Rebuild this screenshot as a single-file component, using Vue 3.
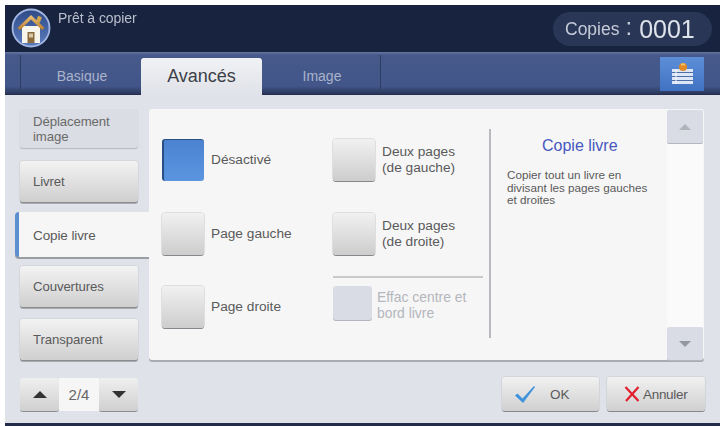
<script setup>
const navItems = [
  { label: 'Déplacement image', state: 'flat' },
  { label: 'Livret', state: 'raised' },
  { label: 'Copie livre', state: 'active' },
  { label: 'Couvertures', state: 'raised' },
  { label: 'Transparent', state: 'raised' },
]
</script>

<template>
  <div class="screen">
    <header class="status">
      <div class="home">
        <svg width="40" height="40" viewBox="0 0 40 40">
          <defs>
            <linearGradient id="hb" x1="0" y1="0" x2="0" y2="1">
              <stop offset="0" stop-color="#2f4a86" />
              <stop offset="1" stop-color="#5a7cc0" />
            </linearGradient>
            <linearGradient id="roof" x1="0" y1="0" x2="0" y2="1">
              <stop offset="0" stop-color="#efc577" />
              <stop offset="1" stop-color="#b87a2c" />
            </linearGradient>
          </defs>
          <circle cx="20" cy="20" r="18.500" fill="url(#hb)" stroke="#a3b6e2" stroke-width="1.800" />
          <rect x="11" y="18" width="18" height="17" fill="#f8f5ec" />
          <rect x="26" y="8" width="4" height="6" fill="#d6a84e" transform="rotate(20 27 11)" />
          <path d="M6.500 20 20 7l13.500 13-2.500 2L20 11.500 9 22z" fill="url(#roof)" />
          <rect x="16.500" y="24" width="7" height="11" fill="#8d6b3c" />
          <rect x="18" y="25.500" width="4" height="4" fill="#d6c8a8" />
        </svg>
      </div>
      <span class="ready">Prêt à copier</span>
      <div class="copies">
        <span class="copies-label">Copies</span>
        <span class="copies-colon">:</span>
        <span class="copies-value">0001</span>
      </div>
    </header>

    <nav class="tabs">
      <div class="tab first">Basique</div>
      <div class="tab current">Avancés</div>
      <div class="tab last">Image</div>
      <div class="tray">
        <svg width="26" height="26" viewBox="0 0 26 26">
          <rect x="3" y="8" width="21" height="15" fill="#dce6f6" />
          <path d="M3 11.500h21M3 15.500h21M3 19.500h21" stroke="#4f6ea3" stroke-width="1.200" />
          <path d="M7 8v15" stroke="#f6f8fc" stroke-width="1" />
          <circle cx="14" cy="6" r="4" fill="#e28a26" />
          <path d="M12 2.500h4v2h-4z" fill="#f4c26a" />
        </svg>
      </div>
    </nav>

    <main class="body">
      <aside class="side">
        <div class="nav">
          <div v-for="item in navItems" :key="item.label" class="nav-item" :class="item.state">
            {{ item.label }}
          </div>
        </div>
        <div class="pager">
          <button class="pg-btn"><span class="tri up"></span></button>
          <div class="pg-num">2/4</div>
          <button class="pg-btn"><span class="tri down"></span></button>
        </div>
      </aside>

      <div class="content">
        <section class="panel">
          <div class="options">
            <div class="col col-a">
              <div class="opt"><span class="box on"></span><span class="opt-text">Désactivé</span></div>
              <div class="opt"><span class="box"></span><span class="opt-text">Page gauche</span></div>
              <div class="opt low"><span class="box"></span><span class="opt-text">Page droite</span></div>
            </div>
            <div class="col col-b">
              <div class="opt"><span class="box"></span><span class="opt-text two">Deux pages<br />(de gauche)</span></div>
              <div class="opt"><span class="box"></span><span class="opt-text two">Deux pages<br />(de droite)</span></div>
              <div class="opt disabled"><span class="box off"></span><span class="opt-text">Effac centre et<br />bord livre</span></div>
            </div>
          </div>
          <div class="info">
            <h2>Copie livre</h2>
            <p>Copier tout un livre en divisant les pages gauches et droites</p>
          </div>
          <div class="scroll">
            <div class="sc-btn"><span class="tri sm up"></span></div>
            <div class="sc-btn"><span class="tri sm down"></span></div>
          </div>
        </section>
        <footer class="actions">
          <button class="act ok">
            <svg width="22" height="19" viewBox="0 0 22 19"><path d="M1 10.500 3.500 8.500 8.500 13.500 20 1l1 1L9 18z" fill="#3f92dc" /></svg>
            <span>OK</span>
          </button>
          <button class="act cancel">
            <svg width="16" height="16" viewBox="0 0 16 16"><path d="M1.500 1 14.500 15M14.500 1 2 15" stroke="#e0202c" stroke-width="2.200" fill="none" /></svg>
            <span>Annuler</span>
          </button>
        </footer>
      </div>
    </main>
  </div>
</template>

<style>
html, body { margin: 0; background: #fff; overflow: hidden; }
</style>

<style scoped>
.screen {
  box-sizing: border-box;
  width: 720px;
  height: 426px;
  padding: 5px 0 0 5px;
  display: flex;
  flex-direction: column;
  font-family: "Liberation Sans", Arial, sans-serif;
  color: #555;
  overflow: hidden;
  filter: blur(0.35px);
}
.status {
  height: 47px;
  flex: none;
  display: flex;
  background: #18233f;
  position: relative;
  padding-left: 6px;
  box-sizing: border-box;
}
.home { margin-top: 3px; width: 40px; height: 40px; }
.ready {
  margin: 5px 0 0 7px;
  font-size: 14px;
  letter-spacing: -0.05px;
  color: #b9bfcc;
}
.copies {
  margin: 7px 8px 0 auto;
  width: 159px;
  height: 34px;
  box-sizing: border-box;
  border-radius: 17px;
  background: #2a3656;
  color: #c5cbd8;
  display: flex;
  align-items: center;
  padding-left: 12px;
}
.copies-label { font-size: 17.500px; }
.copies-colon { font-size: 24px; margin: -4px 7px 0 6px; }
.copies-value { font-size: 25px; color: #dfe3ea; }
.tabs {
  height: 43px;
  flex: none;
  display: flex;
  background: linear-gradient(#6477a0 0, #46598a 3px, #43568a 34px, #2c3a5e 41px, #232c48 43px);
  position: relative;
}
.tab {
  box-sizing: border-box;
  height: 36px;
  margin-top: 6px;
  display: flex;
  align-items: center;
  justify-content: center;
  font-size: 14px;
  color: #a9b3cb;
}
.first { width: 136px; padding-left: 18px; }
.first::before {
  content: "";
  position: absolute;
  left: 15px;
  top: 3px;
  height: 35px;
  width: 1px;
  background: #2e3d63;
}
.current {
  width: 121px;
  height: 37px;
  border-radius: 3px 3px 0 0;
  background: linear-gradient(#f1f2f5, #dfe2e8);
  color: #3c3f47;
  font-size: 18px;
}
.last { width: 120px; }
.last::after {
  content: "";
  position: absolute;
  left: 375px;
  top: 3px;
  height: 35px;
  width: 1px;
  background: #2e3d63;
}
.tray {
  position: absolute;
  right: 16px;
  top: 5px;
  width: 44px;
  height: 34px;
  background: linear-gradient(#5d8fd8, #3f72c2);
  display: flex;
  align-items: center;
  justify-content: center;
}
.body {
  flex: 1;
  display: flex;
  background: #dfe2e8;
  border-bottom: 3px solid #232c48;
  min-height: 0;
}
.side {
  width: 144px;
  flex: none;
  padding-top: 14px;
  display: flex;
  flex-direction: column;
}
.nav {
  display: flex;
  flex-direction: column;
}
.nav-item {
  box-sizing: border-box;
  width: 118px;
  margin-left: 15px;
  padding: 0 13px;
  display: flex;
  align-items: center;
  font-size: 13.200px;
  line-height: 15px;
  letter-spacing: -0.1px;
  border-radius: 3px;
  color: #5a5a5a;
}
.nav-item.flat {
  height: 39px;
  background: #dadde3;
  box-shadow: 0 1px 1px #b5b8bf;
  color: #6a6a6a;
}
.nav-item.raised {
  height: 41px;
  background: linear-gradient(#f3f3f3, #cfcfcf);
  box-shadow: 0 1px 0 #8a8c90, 0 2px 0 #a9abb0, 0 0 0 .5px #c8c9cc;
}
.nav-item.flat + .nav-item { margin-top: 13px; }
.nav-item.raised + .active { margin-top: 10px; }
.active + .raised { margin-top: 9px; }
.raised + .raised { margin-top: 12px; }
.nav-item.active {
  position: relative;
  width: 134px;
  height: 45px;
  margin-left: 10px;
  background: #f6f6f6;
  border-left: 4px solid #5d8fd0;
  padding: 1px 0 0 14px;
  border-radius: 4px 0 0 4px;
  box-shadow: 0 2px 0 #9a9da3;
  font-size: 13.500px;
  z-index: 2;
}
.pager {
  margin: 18px 0 0 15px;
  width: 118px;
  height: 33px;
  display: flex;
  border-radius: 3px;
}
.pg-btn {
  width: 39px;
  border: 0;
  padding: 0;
  border-radius: 3px;
  background: linear-gradient(#efefef, #d0d0d0);
  box-shadow: 0 1px 0 #8a8c90;
  display: flex;
  align-items: center;
  justify-content: center;
}
.pg-num {
  width: 40px;
  background: #f6f6f6;
  display: flex;
  align-items: center;
  justify-content: center;
  font-size: 15px;
  color: #666;
}
.tri {
  display: block;
  width: 0;
  height: 0;
  border-left: 7px solid transparent;
  border-right: 7px solid transparent;
}
.tri.up { border-bottom: 7px solid #333; }
.tri.down { border-top: 7px solid #333; }
.tri.sm { border-left-width: 6px; border-right-width: 6px; }
.tri.sm.up { border-bottom: 6px solid #b0b4bb; }
.tri.sm.down { border-top: 6px solid #9498a0; }
.content {
  flex: 1;
  min-width: 0;
  padding-top: 14px;
  display: flex;
  flex-direction: column;
}
.panel {
  position: relative;
  margin-right: 16px;
  height: 251px;
  box-sizing: border-box;
  background: #f6f6f6;
  border-radius: 3px;
  box-shadow: 0 2px 0 #a9abb0;
  display: flex;
  padding: 20px 0 22px 0;
}
.options {
  width: 342px;
  flex: none;
  display: flex;
  border-right: 2px solid #b8babe;
  box-sizing: border-box;
}
.col { display: flex; flex-direction: column; }
.col-a { width: 184px; padding: 10px 0 0 13px; box-sizing: border-box; gap: 32px; }
.col-b { flex: 1; padding-top: 10px; padding-right: 6px; gap: 32px; }
.low { margin-top: -1px; }
.opt { display: flex; align-items: center; height: 42px; }
.box {
  width: 42px;
  height: 42px;
  flex: none;
  box-sizing: border-box;
  border-radius: 3px;
  background: linear-gradient(#f1f1f1, #cdcdcd);
  box-shadow: 0 1px 0 #85878c, 0 0 0 .5px #c4c5c8;
}
.box.on {
  background: linear-gradient(#4b83d1, #5b95e0);
  border-top: 1px solid #2a4f86;
  border-left: 2px solid #2a4f86;
  box-shadow: none;
}
.box.off {
  width: 39px;
  height: 34px;
  background: #d9dce4;
  box-shadow: 0 1px 0 #b3b6bd;
}
.opt-text {
  margin-left: 7px;
  font-size: 13.700px;
  line-height: 16px;
  color: #5a5a5a;
}
.opt-text.two { margin-top: -1px; }
.disabled {
  height: 53px;
  margin-top: -11px;
  border-top: 2px solid #c9cacc;
  box-sizing: border-box;
  align-items: flex-start;
  padding-top: 8px;
}
.disabled .opt-text { color: #b4b7bd; margin-left: 5px; margin-top: 3px; font-size: 13.900px; }
.info {
  width: 174px;
  flex: none;
  box-sizing: border-box;
  padding: 8px 0 0 16px;
}
.info h2 {
  margin: 0 0 0 35px;
  font-weight: 400;
  font-size: 16px;
  color: #4658c0;
}
.info p {
  margin: 14px 0 0;
  width: 150px;
  font-size: 11.700px;
  line-height: 12.500px;
  color: #5a5a5a;
}
.scroll {
  position: absolute;
  right: 1px;
  top: 1px;
  bottom: 0;
  width: 36px;
  display: flex;
  flex-direction: column;
  justify-content: space-between;
  background: #fafafa;
}
.sc-btn {
  height: 33px;
  background: #d9dce4;
  border-radius: 2px;
  box-shadow: 0 1px 0 #b3b6bd;
  display: flex;
  align-items: center;
  justify-content: center;
}
.actions {
  margin-top: 17px;
  display: flex;
  justify-content: flex-end;
  gap: 8px;
  padding-right: 15px;
}
.act {
  width: 97px;
  height: 34px;
  box-sizing: border-box;
  border: 0;
  border-radius: 3px;
  background: linear-gradient(#f1f1f1, #d0d0d0);
  box-shadow: 0 1px 0 #85878c, 0 0 0 .5px #c4c5c8;
  display: flex;
  align-items: center;
  font-family: inherit;
  font-size: 13.500px;
  color: #5a5a5a;
  padding: 0;
}
.ok svg { margin-left: 12px; }
.ok span { margin-left: 14px; }
.cancel { width: 98px; }
.cancel svg { margin-left: 17px; }
.cancel span { margin-left: 3px; letter-spacing: -0.3px; }
</style>
